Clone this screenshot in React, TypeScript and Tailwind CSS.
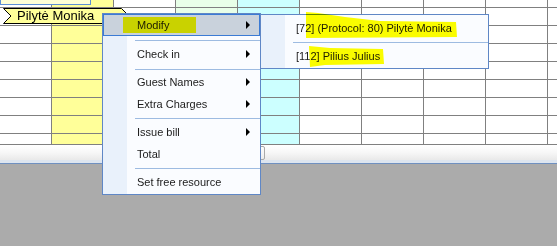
import React from "react";

// Row heights include the bottom grid line
const ROWS = [8, 18, 18, 18, 18, 18, 18, 18, 11];
const ROW_H = [
  "h-[8px]",
  "h-[18px]",
  "h-[18px]",
  "h-[18px]",
  "h-[18px]",
  "h-[18px]",
  "h-[18px]",
  "h-[18px]",
  "h-[11px]",
];

// background per column (first column is 52px, the others 62px)
const COL_BG = [
  "bg-white",
  "bg-[#ffff99]",
  "bg-white",
  "bg-[#e8ffe8]",
  "bg-[#ccffff]",
  "bg-white",
  "bg-white",
  "bg-white",
  "bg-white",
];

function MenuItem({
  label,
  arrow,
  hot,
}: {
  label: string;
  arrow?: boolean;
  hot?: boolean;
}) {
  return (
    <div
      className={
        hot
          ? "flex h-[22px] items-center border border-[#3b7bd4] bg-[#c9d2dc] pl-[33px] pr-[9px]"
          : "flex h-[22px] items-center pl-[34px] pr-[10px]"
      }
    >
      <span className="flex-1">{label}</span>
      {arrow && (
        <span className="h-0 w-0 border-y-[4px] border-l-[4px] border-y-transparent border-l-black" />
      )}
    </div>
  );
}

function Sep({ cls }: { cls: string }) {
  return <div className={"ml-[32px] h-px bg-[#9dbbe1] " + cls} />;
}

export default function App() {
  return (
    <div className="relative flex h-[246px] w-[557px] flex-col overflow-hidden bg-[#ababab] font-['Liberation_Sans',Arial,sans-serif] text-[11px] text-[#1b1b1b]">
      {/* Grid */}
      <div className="flex flex-col bg-white">
        {ROWS.map((_, r) => (
          <div key={r} className={"flex border-b border-[#808080] " + ROW_H[r]}>
            {COL_BG.map((bg, c) => (
              <div
                key={c}
                className={
                  (c === 0 ? "w-[52px] " : "w-[62px] ") +
                  "shrink-0 border-r border-[#808080] " +
                  bg
                }
              />
            ))}
            <div className="flex-1 bg-white" />
          </div>
        ))}
      </div>

      {/* Horizontal scrollbar */}
      <div className="h-[15px] bg-gradient-to-b from-[#ffffff] via-[#f7f7f7] to-[#e9e9e9]">
        <div className="ml-[200px] mt-px h-[14px] w-[65px] rounded-[2px] border border-[#a9a9a9] bg-gradient-to-b from-[#fdfdfd] to-[#ececec]" />
      </div>
      <div className="h-[3px] bg-[#dde5ef]" />
      <div className="h-px bg-[#6f90c0]" />
      <div className="flex-1 bg-[#ababab]" />

      {/* Top-left cell box from previous row */}
      <div className="absolute left-0 top-[-10px] h-[15px] w-[91px] border border-[#5d8fd6] bg-[#ffffd6]" />

      {/* Reservation tag */}
      <div className="absolute left-0 top-0 h-[30px] w-[135px]">
        <svg width="135" height="30" className="absolute inset-0">
          <polygon
            points="3.5,8.5 121.5,8.5 129,16 121.5,23.5 3.5,23.5 11,16"
            fill="#ffff99"
            stroke="#000"
            strokeWidth="1"
          />
        </svg>
        <div className="absolute left-[17px] top-[8px] h-[16px] text-[13px] leading-[16px] text-black">
          Pilytė Monika
        </div>
      </div>

      {/* Context menu */}
      <div className="absolute left-[102px] top-[13px] flex h-[182px] w-[159px] flex-col border border-[#5f87c6] bg-[linear-gradient(to_right,#e9f1fb_24px,#fafcff_24px)] leading-[22px]">
        <MenuItem label="Modify" arrow hot />
        <Sep cls="mt-[4px] mb-[2px]" />
        <MenuItem label="Check in" arrow />
        <Sep cls="mt-[4px] mb-[1px]" />
        <MenuItem label="Guest Names" arrow />
        <MenuItem label="Extra Charges" arrow />
        <Sep cls="mt-[3px] mb-[2px]" />
        <MenuItem label="Issue bill" arrow />
        <MenuItem label="Total" />
        <Sep cls="mt-[3px] mb-[2px]" />
        <MenuItem label="Set free resource" />
      </div>

      {/* Submenu */}
      <div className="absolute left-[260px] top-[14px] flex h-[55px] w-[229px] flex-col border border-[#5f87c6] bg-[linear-gradient(to_right,#e9f1fb_24px,#fafcff_24px)] pb-[1px] pt-[2px] leading-[22px]">
        <div className="flex h-[22px] items-center pl-[35px]">[72] (Protocol: 80) Pilytė Monika</div>
        <Sep cls="mt-[3px] mb-[2px]" />
        <div className="flex h-[22px] items-center pl-[35px]">[112] Pilius Julius</div>
      </div>

      {/* Marker highlights painted over the screenshot */}
      <svg
        width="557"
        height="246"
        className="pointer-events-none absolute inset-0 mix-blend-multiply"
      >
        <rect x="123" y="17" width="73" height="16" fill="#ffff00" />
        <polygon
          points="306,12 318,13 345,17 380,21 456,22 457,37 306,38"
          fill="#ffff00"
        />
        <polygon
          points="309,46 330,48 383,49 384,64 325,65 310,67"
          fill="#ffff00"
        />
      </svg>
    </div>
  );
}
